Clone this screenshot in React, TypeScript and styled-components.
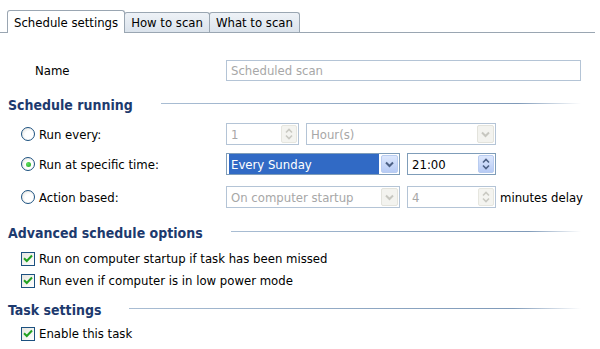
import React from "react";
import styled, { createGlobalStyle } from "styled-components";

const Global = createGlobalStyle`
  html, body { margin: 0; padding: 0; background: #fff; }
  body { font-family: "DejaVu Sans Condensed", "DejaVu Sans", "Liberation Sans", sans-serif; font-size: 13px; color: #000; }
`;

const Page = styled.div`
  width: 600px;
  height: 349px;
  overflow: hidden;
  background: #fff;
`;

const TabBar = styled.div`
  display: flex;
  align-items: flex-end;
  margin: 10px 5px 0 0;
  padding-left: 7px;
  height: 22px;
  border-bottom: 1px solid #9aa6b2;
`;

const Tab = styled.div<{ active?: boolean }>`
  height: ${(p) => (p.active ? 22 : 19)}px;
  padding: 0 6px;
  display: flex;
  align-items: center;
  font-size: 13px;
  border: 1px solid #9aa6b2;
  border-bottom: none;
  border-radius: 3px 3px 0 0;
  background: ${(p) => (p.active ? "#fff" : "linear-gradient(#eef2f7, #dbe3ec)")};
  margin-bottom: ${(p) => (p.active ? -1 : 0)}px;
  margin-left: ${(p) => (p.active ? 0 : -1)}px;
  position: relative;
  z-index: ${(p) => (p.active ? 1 : 0)};
`;

const Body = styled.div`
  padding: 27px 19px 0 8px;
`;

const Row = styled.div`
  display: grid;
  grid-template-columns: 218px 1fr;
  align-items: center;
`;

const NameLabel = styled.span`
  padding-left: 27px;
`;

const Field = styled.div<{ w?: number; disabled?: boolean; h?: number }>`
  box-sizing: border-box;
  width: ${(p) => (p.w ? `${p.w}px` : "100%")};
  height: ${(p) => p.h ?? 22}px;
  border: 1px solid ${(p) => (p.disabled ? "#b4c4d6" : "#7f9db9")};
  background: #fff;
  color: ${(p) => (p.disabled ? "#a7a7a7" : "#000")};
  display: flex;
  align-items: center;
  padding: 0 4px;
  white-space: nowrap;
`;

const Heading = styled.div<{ top: number; bottom: number }>`
  display: flex;
  align-items: center;
  gap: 28px;
  height: 17px;
  margin: ${(p) => p.top}px 0 ${(p) => p.bottom}px;
  font-weight: bold;
  font-size: 14px;
  color: #1d3a6e;
  &::after {
    content: "";
    flex: 1;
    height: 1px;
    margin-top: -2px;
    background: linear-gradient(90deg, #a9bdd3, #7f9ab9 85%, #fff);
  }
`;

const Options = styled.div`
  display: flex;
  flex-direction: column;
  padding-left: 13px;
`;

const OptRow = styled.div<{ space: number }>`
  display: grid;
  grid-template-columns: 205px auto;
  align-items: center;
  margin-top: ${(p) => p.space}px;
`;

const Choice = styled.label`
  display: flex;
  align-items: center;
  gap: 4px;
  height: 15px;
  white-space: nowrap;
`;

const RadioCircle = styled.span<{ checked?: boolean }>`
  box-sizing: border-box;
  width: 14px;
  height: 14px;
  border-radius: 50%;
  border: 1px solid #1c5180;
  background: radial-gradient(circle at 60% 60%, #fff 40%, #dcdcd6);
  display: flex;
  align-items: center;
  justify-content: center;
  &::after {
    content: "";
    display: ${(p) => (p.checked ? "block" : "none")};
    width: 5px;
    height: 5px;
    border-radius: 50%;
    background: radial-gradient(circle at 35% 35%, #5fe05f, #21a121);
  }
`;

const Controls = styled.div`
  display: flex;
  align-items: center;
  gap: 7px;
`;

const Text = styled.span<{ selected?: boolean }>`
  flex: 1;
  height: 100%;
  display: flex;
  align-items: center;
  ${(p) => (p.selected ? "background:#316ac5;color:#fff;margin-left:-2px;padding-left:2px;margin-right:2px;" : "")}
`;

const DropBtn = styled.span<{ disabled?: boolean }>`
  box-sizing: border-box;
  width: 17px;
  height: 18px;
  margin-right: -3px;
  border: 1px solid ${(p) => (p.disabled ? "#e3e3dc" : "#b9ccf0")};
  border-radius: 2px;
  background: ${(p) => (p.disabled ? "#f3f3ef" : "linear-gradient(#dce7fd, #b7cbf5)")};
  display: flex;
  align-items: center;
  justify-content: center;
  color: ${(p) => (p.disabled ? "#c7c7c0" : "#4d6185")};
`;

const SpinBtn = styled.span<{ disabled?: boolean }>`
  box-sizing: border-box;
  width: 16px;
  height: 18px;
  margin-right: -3px;
  border: 1px solid ${(p) => (p.disabled ? "#e6e6df" : "#b9ccf0")};
  border-radius: 2px;
  background: ${(p) => (p.disabled ? "#f4f4f0" : "linear-gradient(#dce7fd, #b7cbf5)")};
  display: flex;
  align-items: center;
  justify-content: center;
  color: ${(p) => (p.disabled ? "#c9c9c2" : "#4d6185")};
`;

const Suffix = styled.span`
  margin-left: -3px;
  white-space: nowrap;
`;

const Checks = styled.div`
  display: flex;
  flex-direction: column;
  gap: 7px;
  padding-left: 13px;
`;

const Box = styled.span`
  box-sizing: border-box;
  width: 14px;
  height: 14px;
  border: 1px solid #1c5180;
  background: linear-gradient(135deg, #e6e6e0, #fff);
  display: flex;
  align-items: center;
  justify-content: center;
`;

const Chevron = () => (
  <svg width="9" height="7" viewBox="0 0 9 7">
    <path d="M1 1.5 L4.5 5 L8 1.5" fill="none" stroke="currentColor" strokeWidth="2" />
  </svg>
);

const Arrows = () => (
  <svg width="8" height="12" viewBox="0 0 8 12">
    <path d="M1 4.5 L4 1.5 L7 4.5 M1 7.5 L4 10.5 L7 7.5" fill="none" stroke="currentColor" strokeWidth="1.6" />
  </svg>
);

const Check = () => (
  <svg width="10" height="9" viewBox="0 0 10 9">
    <path d="M1 4.2 L3.8 7 L9 1.5" fill="none" stroke="#21a121" strokeWidth="2" />
  </svg>
);

const Select = ({ value, w, disabled, selected }: { value: string; w: number; disabled?: boolean; selected?: boolean }) => (
  <Field w={w} disabled={disabled}>
    <Text selected={selected}>{value}</Text>
    <DropBtn disabled={disabled}>
      <Chevron />
    </DropBtn>
  </Field>
);

const Spinner = ({ value, w, disabled }: { value: string; w: number; disabled?: boolean }) => (
  <Field w={w} disabled={disabled}>
    <Text>{value}</Text>
    <SpinBtn disabled={disabled}>
      <Arrows />
    </SpinBtn>
  </Field>
);

const Radio = ({ label, checked }: { label: string; checked?: boolean }) => (
  <Choice>
    <RadioCircle checked={checked} />
    {label}
  </Choice>
);

const CheckItem = ({ label }: { label: string }) => (
  <Choice>
    <Box>
      <Check />
    </Box>
    {label}
  </Choice>
);

export default function App() {
  return (
    <Page>
      <Global />
      <TabBar>
        <Tab active>Schedule settings</Tab>
        <Tab>How to scan</Tab>
        <Tab>What to scan</Tab>
      </TabBar>
      <Body>
        <Row>
          <NameLabel>Name</NameLabel>
          <Field disabled h={21}>Scheduled scan</Field>
        </Row>
        <Heading top={15} bottom={0}>Schedule running</Heading>
        <Options>
          <OptRow space={10}>
            <Radio label="Run every:" />
            <Controls>
              <Spinner value="1" w={73} disabled />
              <Select value="Hour(s)" w={190} disabled />
            </Controls>
          </OptRow>
          <OptRow space={8}>
            <Radio label="Run at specific time:" checked />
            <Controls>
              <Select value="Every Sunday" w={174} selected />
              <Spinner value="21:00" w={89} />
            </Controls>
          </OptRow>
          <OptRow space={11}>
            <Radio label="Action based:" />
            <Controls>
              <Select value="On computer startup" w={174} disabled />
              <Spinner value="4" w={89} disabled />
              <Suffix>minutes delay</Suffix>
            </Controls>
          </OptRow>
        </Options>
        <Heading top={16} bottom={10}>Advanced schedule options</Heading>
        <Checks>
          <CheckItem label="Run on computer startup if task has been missed" />
          <CheckItem label="Run even if computer is in low power mode" />
        </Checks>
        <Heading top={13} bottom={8}>Task settings</Heading>
        <Checks>
          <CheckItem label="Enable this task" />
        </Checks>
      </Body>
    </Page>
  );
}
